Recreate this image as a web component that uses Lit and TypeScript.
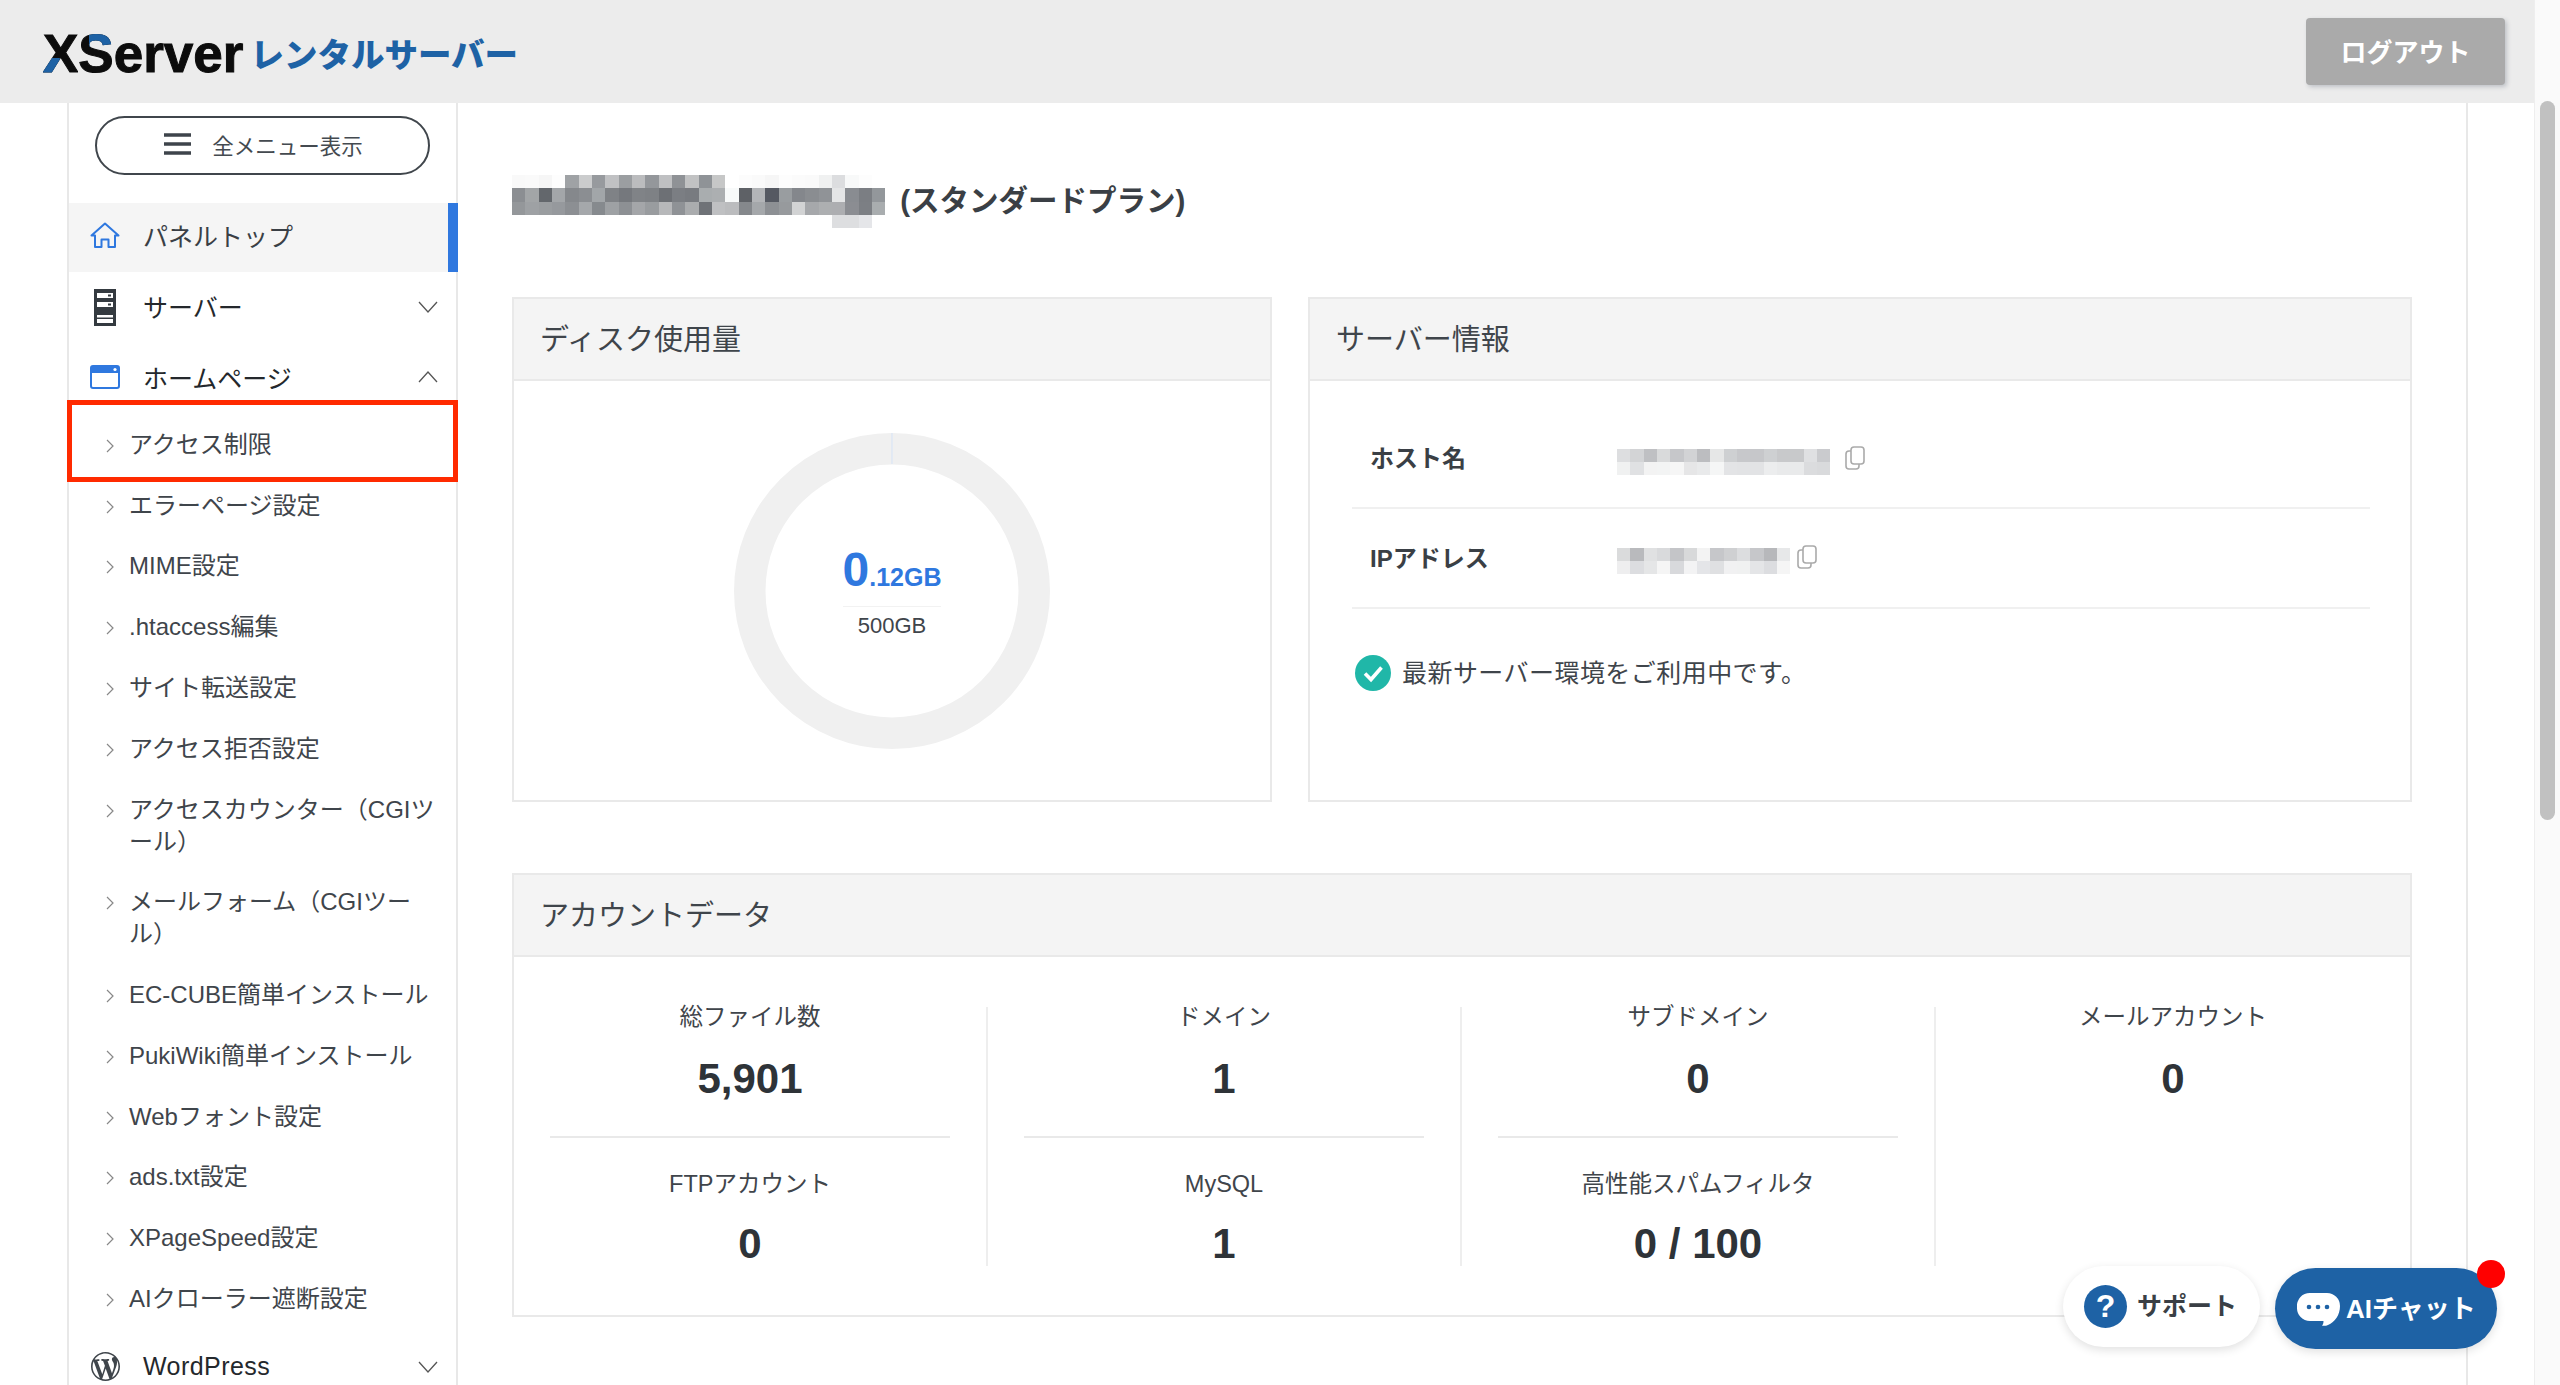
import { LitElement, html, css, svg } from "lit";
import { customElement } from "lit/decorators.js";

const navSubs = [
	["アクセス制限"],
	["エラーページ設定"],
	["MIME設定"],
	[".htaccess編集"],
	["サイト転送設定"],
	["アクセス拒否設定"],
	["アクセスカウンター（CGIツ", "ール）"],
	["メールフォーム（CGIツー", "ル）"],
	["EC-CUBE簡単インストール"],
	["PukiWiki簡単インストール"],
	["Webフォント設定"],
	["ads.txt設定"],
	["XPageSpeed設定"],
	["AIクローラー遮断設定"],
];

const stats = [
	[["総ファイル数", "5,901"], ["FTPアカウント", "0"]],
	[["ドメイン", "1"], ["MySQL", "1"]],
	[["サブドメイン", "0"], ["高性能スパムフィルタ", "0 / 100"]],
	[["メールアカウント", "0"]],
];

// mosaics over the hidden domain / host / ip, row by row
const titleMosaic = [
	"f9f9f9 fafafa f6f6f6 fdfdfd 9fa2a5 cbcccd 979a9e c0c1c3 9b9ea1 bbbcbe 94979b bfc0c2 8f9296 c1c2c3 8f9397 c6c7c7 ffffff fcfcfc fafafa f6f6f6 fdfdfd fbfbfb fafafa f0f1f1 dcdddf f8f9f9 fdfdfd ffffff",
	"8b8e92 a2a5a7 63676c a3a6a9 85888c 8b8e92 a2a6a9 7f8286 75787d 808387 7e8185 6d7075 7b7e83 787b80 a9adaf acafb1 f8fafa 5e6166 b3b5b8 555962 999da0 84878c 8a8d91 909397 e4e5e6 898c91 7b7e83 93979b",
	"94979a 9ea1a4 9a9da0 96999d 8c8f93 a5a8ab 868a8e 9ea1a4 8d9094 a4a6a9 999c9f b7b8ba 8f9296 aaacae 6f7277 bfc0c2 bbbcbe 85888c a5a8ab 8d9094 979a9d d2d3d4 a6a8ab adafb1 adaeb1 8b8d92 7c7f84 a9adaf",
	"ffffff ffffff ffffff ffffff ffffff ffffff ffffff ffffff ffffff ffffff ffffff ffffff ffffff ffffff ffffff ffffff ffffff ffffff ffffff ffffff ffffff ffffff ffffff ffffff dddee0 dddee0 e5e6e9 ffffff",
];
const hostMosaic = [
	"dddee0 d3d4d6 bfc0c3 d9dadb c6c7ca d2d3d5 bcbdc0 e6e7e7 ced0d2 c7c8cb c6c7ca ced0d2 c8c9cb c8c9cb dfe0e2 cacbce",
	"f0f1f1 e0e1e3 f3f3f3 f3f4f4 f6f6f6 e6e6e7 e9eaeb f5f6f6 e3e4e6 e2e3e5 e2e3e5 ecedee e9eaeb e9eaeb dbdcde d9dadc",
];
const ipMosaic = [
	"dadbdc b9babd e0e1e2 d9dadc c4c5c8 d8d9da f3f3f3 c6c7ca cfd0d2 dcdddf c6c7ca b7b8bb e7e8e9",
	"eeeeef dcdde0 e5e6e7 f5f5f5 d8d9dc f3f3f4 e4e5e8 dfe0e2 f1f1f2 f0f1f1 e4e5e7 dcdde0 f5f5f5",
];

const homeIcon = svg`<path d="M1.5 13.5 15 1.5l13.5 12H25V25h-6.5v-7.5h-7V25H5V13.5z" fill="none" stroke="#2f78df" stroke-width="2" stroke-linejoin="round"/>`;
const wpPath =
	"M20 10c0-5.51-4.49-10-10-10C4.48 0 0 4.49 0 10c0 5.52 4.48 10 10 10 5.51 0 10-4.48 10-10zM7.78 15.37L4.37 6.22c.55-.02 1.17-.08 1.17-.08.5-.06.44-1.13-.06-1.11 0 0-1.45.11-2.37.11-.18 0-.37 0-.58-.01C4.12 2.69 6.87 1.11 10 1.11c2.33 0 4.45.87 6.05 2.34-.68-.11-1.65.39-1.65 1.58 0 .74.45 1.36.9 2.1.35.61.55 1.36.55 2.46 0 1.49-1.4 5-1.4 5l-3.03-8.37c.54-.02.82-.17.82-.17.5-.05.44-1.25-.06-1.22 0 0-1.44.12-2.38.12-.87 0-2.33-.12-2.33-.12-.5-.03-.56 1.2-.06 1.22l.92.08 1.26 3.41zM17.41 10c.24-.64.74-1.87.43-4.25.7 1.29 1.05 2.71 1.05 4.25 0 3.29-1.73 6.24-4.4 7.78.97-2.59 1.94-5.2 2.92-7.78zM6.1 18.09C3.12 16.65 1.11 13.53 1.11 10c0-1.3.23-2.48.72-3.59C3.25 10.3 4.67 14.2 6.1 18.09zm4.03-6.63l2.58 6.98c-.86.29-1.76.45-2.71.45-.79 0-1.57-.11-2.29-.33.81-2.38 1.62-4.74 2.42-7.1z";

@customElement("app-root")
export class AppRoot extends LitElement {
	static styles = css`
		:host {
			display: flex;
			position: relative;
			height: 1385px;
			overflow: hidden;
			background: #fff;
			color: #3a3f45;
			font-family: "Liberation Sans", "Noto Sans CJK JP", sans-serif;
		}

		* {
			box-sizing: border-box;
		}

		.page {
			flex: 1;
			min-width: 0;
			display: flex;
			flex-direction: column;
		}

		.topbar {
			height: 103px;
			flex: none;
			background: #ececec;
			display: flex;
			align-items: center;
			justify-content: space-between;
			padding: 0 29px 0 43px;
		}

		.logo {
			display: flex;
			align-items: center;
			gap: 7px;
			margin-top: 4px;
		}

		.logo-en {
			font-size: 53px;
			font-weight: 700;
			line-height: 54px;
			color: #0c0c0c;
			-webkit-text-stroke: 1px #0c0c0c;
		}

		.logo-x,
		.logo-s {
			display: inline-block;
			color: transparent;
			-webkit-text-stroke: 1px transparent;
			-webkit-background-clip: text;
			background-clip: text;
		}

		.logo-x {
			background-image: linear-gradient(#1e62a5, #1e62a5),
				linear-gradient(#0c0c0c, #0c0c0c);
			background-size: 48% 42%, 100% 100%;
			background-position: left bottom, 0 0;
			background-repeat: no-repeat;
		}

		.logo-s {
			background-image: linear-gradient(#1e62a5, #1e62a5),
				linear-gradient(#0c0c0c, #0c0c0c);
			background-size: 70% 36%, 100% 100%;
			background-position: right top, 0 0;
			background-repeat: no-repeat;
		}

		.logo-jp {
			font-size: 33.5px;
			font-weight: 900;
			color: #1e62a5;
			line-height: 40px;
			margin-top: 4px;
		}

		.logout {
			width: 199px;
			height: 67px;
			display: flex;
			align-items: center;
			justify-content: center;
			padding-bottom: 3px;
			background: #aaaaaa;
			color: #fff;
			border-radius: 4px;
			font-size: 26px;
			font-weight: 700;
			box-shadow: 2px 2px 4px rgba(60, 70, 90, 0.25);
		}

		.body {
			flex: 1;
			min-height: 0;
			display: flex;
			padding: 0 66px 0 67px;
		}

		.sidebar {
			width: 391px;
			flex: none;
			border-left: 2px solid #e8e8e8;
			border-right: 2px solid #e8e8e8;
			padding-top: 13px;
		}

		.menu-btn {
			margin: 0 26px 28px 26px;
			height: 59px;
			padding: 0 0 3px 2px;
			border: 2px solid #40464c;
			border-radius: 30px;
			display: flex;
			align-items: center;
			justify-content: center;
			gap: 21px;
			font-size: 21.5px;
			color: #444a50;
		}

		.nav-item {
			height: 70px;
			display: flex;
			align-items: center;
			position: relative;
			padding-left: 20px;
			font-size: 25px;
			color: #24282c;
		}

		.nav-item.active {
			height: 69px;
			padding-bottom: 5px;
			margin-right: -2px;
			background: #f5f5f5;
			color: #3a3f45;
			border-right: 10px solid #2f78df;
		}

		.nav-item.server .nav-label {
			padding-bottom: 3px;
		}

		.nav-item.wp .nav-label {
			letter-spacing: 0.45px;
		}

		.nav-icon {
			width: 32px;
			margin-right: 22px;
			display: flex;
			justify-content: center;
			flex: none;
		}

		.nav-chev {
			margin-left: auto;
			margin-right: 18px;
		}

		.subs {
			position: relative;
			margin-top: 2.5px;
			margin-bottom: 2.3px;
		}

		.sub {
			display: flex;
			padding: 14.4px 16px 14.4px 37px;
			font-size: 24px;
			line-height: 32px;
			color: #3f454b;
		}

		.sub svg {
			flex: none;
			margin: 10px 15px 0 0;
		}

		.highlight {
			position: absolute;
			left: -2px;
			right: -2px;
			top: -14.5px;
			height: 82px;
			border: 5px solid #ff2a00;
		}

		.main {
			flex: 1;
			min-width: 0;
			border-right: 2px solid #e8e8e8;
			padding: 72px 54px 0 54px;
		}

		.title {
			display: flex;
			gap: 15px;
			height: 53px;
			margin-bottom: 69px;
			font-size: 29.5px;
			font-weight: 700;
			line-height: 52px;
			color: #3a3f45;
		}

		.mosaic {
			display: grid;
			grid-auto-rows: 13.33px;
			flex: none;
		}

		.cards {
			display: flex;
			gap: 36px;
			margin-bottom: 71px;
		}

		.card {
			border: 2px solid #e9e9e9;
		}

		.card-disk {
			width: 760px;
			height: 505px;
		}

		.card-server {
			flex: 1;
			height: 505px;
		}

		.card-head {
			height: 82px;
			background: #f4f4f4;
			border-bottom: 2px solid #e9e9e9;
			padding: 0 0 4px 26px;
			display: flex;
			align-items: center;
			font-size: 29px;
			color: #3f454b;
		}

		.disk-body {
			display: flex;
			justify-content: center;
			padding-top: 52px;
		}

		.donut {
			display: grid;
			place-items: center;
		}

		.donut > * {
			grid-area: 1 / 1;
		}

		.usage {
			display: flex;
			flex-direction: column;
			align-items: stretch;
			text-align: center;
			margin-top: -1px;
		}

		.used {
			color: #2f78df;
			font-weight: 700;
			font-size: 25px;
			line-height: 54px;
			border-bottom: 1px solid #f2f2f2;
			padding-bottom: 2px;
		}

		.used b {
			font-size: 48px;
		}

		.total {
			font-size: 22px;
			line-height: 26px;
			margin-top: 6px;
			color: #3f454b;
		}

		.server-body {
			padding: 28px 40px 0 42px;
		}

		.info-row {
			height: 100px;
			display: flex;
			align-items: center;
			border-bottom: 2px solid #f0f0f0;
			padding-left: 18px;
		}

		.info-label {
			width: 247px;
			padding-bottom: 4px;
			font-size: 24px;
			font-weight: 700;
		}

		.info-row .mosaic {
			margin-top: 8px;
		}

		.info-row.ip .mosaic {
			margin-top: 6px;
		}

		.copy {
			margin-left: 15px;
		}

		.copy.near {
			margin: -2px 0 0 7px;
		}

		.status {
			display: flex;
			align-items: center;
			gap: 11px;
			padding: 46px 0 0 3px;
			font-size: 25px;
			letter-spacing: 0.45px;
			line-height: 36px;
			color: #3f454b;
		}

		.stats {
			display: grid;
			grid-template-columns: repeat(4, 1fr);
			padding: 50px 0 49px;
		}

		.stat-col {
			border-right: 2px solid #eeeeee;
		}

		.stat-col:last-child {
			border-right: none;
		}

		.stat {
			margin: 0 36px;
			text-align: center;
		}

		.stat:first-child {
			padding-bottom: 35px;
		}

		.stat:not(:last-child) {
			border-bottom: 2px solid #e9e9e9;
		}

		.stat:nth-child(2) {
			padding-top: 36px;
		}

		.stat-label {
			font-size: 23.5px;
			line-height: 20px;
			color: #3f454b;
			white-space: nowrap;
		}

		.stat-value {
			font-size: 42px;
			font-weight: 700;
			line-height: 44px;
			margin-top: 30px;
			color: #2e3338;
		}

		.stat:nth-child(2) .stat-value {
			margin-top: 28px;
		}

		.scrollbar {
			width: 26px;
			flex: none;
			background: #fafafa;
			border-left: 1px solid #eeeeee;
			padding: 101px 5px 0;
		}

		.thumb {
			height: 719px;
			background: #c1c1c1;
			border-radius: 8px;
		}

		.floating {
			position: absolute;
			right: 63px;
			bottom: 36px;
			display: flex;
			align-items: flex-start;
			gap: 15px;
		}

		.fab {
			height: 81px;
			border-radius: 41px;
			display: flex;
			align-items: center;
			font-size: 26px;
			font-weight: 700;
			box-shadow: 0 3px 10px rgba(0, 0, 0, 0.12);
		}

		.fab-label {
			padding-bottom: 5px;
		}

		.fab-support {
			width: 197px;
			background: #fff;
			margin-top: -2px;
			padding-left: 21px;
			gap: 10px;
			font-size: 25px;
			color: #3a3f45;
		}

		.fab-q {
			width: 43px;
			height: 43px;
			border-radius: 50%;
			background: #1e62a5;
			color: #fff;
			display: flex;
			align-items: center;
			justify-content: center;
			font-size: 32px;
			font-weight: 700;
		}

		.fab-ai {
			width: 222px;
			background: #1e62a5;
			color: #fff;
			padding-left: 22px;
			gap: 6px;
			position: relative;
		}

		.fab-ai svg {
			margin-top: 2px;
		}

		.dot {
			position: absolute;
			top: -8px;
			right: -8px;
			width: 28px;
			height: 28px;
			border-radius: 50%;
			background: #ff0000;
		}
	`;

	private mosaic(rows: string[]) {
		const cols = rows[0].split(" ").length;
		return html`<div
			class="mosaic"
			style="grid-template-columns:repeat(${cols},13.33px)"
		>
			${rows.map((r) =>
				r
					.split(" ")
					.map((c) => html`<div style="background:#${c}"></div>`)
			)}
		</div>`;
	}

	private chevron(up: boolean) {
		return html`<svg class="nav-chev" width="20" height="12" viewBox="0 0 20 12">
			<path
				d=${up ? "M1 11 10 1l9 10" : "M1 1l9 10 9-10"}
				fill="none"
				stroke="#555"
				stroke-width="1.3"
			/>
		</svg>`;
	}

	private copyIcon(near = false) {
		return html`<svg
			class="copy ${near ? "near" : ""}"
			width="20"
			height="24"
			viewBox="0 0 20 24"
		>
			<rect x="1" y="5" width="13" height="18" rx="3" fill="#fff" stroke="#aaa" stroke-width="1.6" />
			<rect x="6" y="1" width="13" height="17" rx="3" fill="#fff" stroke="#aaa" stroke-width="1.6" />
		</svg>`;
	}

	private renderSidebar() {
		return html`<nav class="sidebar">
			<div class="menu-btn">
				<svg width="27" height="22" viewBox="0 0 27 22">
					<path d="M0 2h27M0 11h27M0 20h27" stroke="#3e444b" stroke-width="3.6" />
				</svg>
				<span>全メニュー表示</span>
			</div>
			<div class="nav-item active">
				<span class="nav-icon"><svg width="30" height="27" viewBox="0 0 30 27">${homeIcon}</svg></span>
				<span class="nav-label">パネルトップ</span>
			</div>
			<div class="nav-item server">
				<span class="nav-icon">
					<svg width="22" height="37" viewBox="0 0 22 37">
						<rect width="22" height="37" fill="#343a40" />
						<path d="M3 4h16v5H3zM3 13h16v5H3zM3 26h16v2.5H3zM3 30h16v4H3z" fill="#fff" />
						<path d="M14 5.5h3v2h-3zM14 14.5h3v2h-3z" fill="#343a40" />
					</svg>
				</span>
				<span class="nav-label">サーバー</span>
				${this.chevron(false)}
			</div>
			<div class="nav-item">
				<span class="nav-icon">
					<svg width="30" height="24" viewBox="0 0 30 24">
						<rect x="1" y="1" width="28" height="22" rx="2" fill="#fff" stroke="#2f78df" stroke-width="2" />
						<path d="M1 3a2 2 0 0 1 2-2h24a2 2 0 0 1 2 2v5H1z" fill="#2f78df" />
						<circle cx="25" cy="4.5" r="1.6" fill="#fff" />
					</svg>
				</span>
				<span class="nav-label">ホームページ</span>
				${this.chevron(true)}
			</div>
			<div class="subs">
				<div class="highlight"></div>
				${navSubs.map(
					(lines) => html`<div class="sub">
						<svg width="8" height="14" viewBox="0 0 8 14">
							<path d="M1 1l6 6-6 6" fill="none" stroke="#888" stroke-width="1.2" />
						</svg>
						<span>${lines[0]}${lines[1] ? html`<br />${lines[1]}` : ""}</span>
					</div>`
				)}
			</div>
			<div class="nav-item wp">
				<span class="nav-icon">
					<svg width="29" height="29" viewBox="0 0 20 20"><path d=${wpPath} fill="#3f454b" /></svg>
				</span>
				<span class="nav-label">WordPress</span>
				${this.chevron(false)}
			</div>
		</nav>`;
	}

	private renderMain() {
		return html`<main class="main">
			<div class="title">
				${this.mosaic(titleMosaic)}
				<span>(スタンダードプラン)</span>
			</div>
			<div class="cards">
				<section class="card card-disk">
					<div class="card-head">ディスク使用量</div>
					<div class="disk-body">
						<div class="donut">
							<svg width="316" height="316" viewBox="0 0 316 316">
								<circle cx="158" cy="158" r="142.25" fill="none" stroke="#f0f0f0" stroke-width="31.5" />
								<path d="M158 0v31" stroke="#d5e3f7" stroke-width="1" />
							</svg>
							<div class="usage">
								<div class="used"><b>0</b>.12GB</div>
								<div class="total">500GB</div>
							</div>
						</div>
					</div>
				</section>
				<section class="card card-server">
					<div class="card-head">サーバー情報</div>
					<div class="server-body">
						<div class="info-row">
							<span class="info-label">ホスト名</span>
							${this.mosaic(hostMosaic)} ${this.copyIcon()}
						</div>
						<div class="info-row ip">
							<span class="info-label">IPアドレス</span>
							${this.mosaic(ipMosaic)} ${this.copyIcon(true)}
						</div>
						<div class="status">
							<svg width="36" height="36" viewBox="0 0 36 36">
								<circle cx="18" cy="18" r="18" fill="#20b7a8" />
								<path d="M10 18.5l6 6 10.5-12" fill="none" stroke="#fff" stroke-width="3.6" />
							</svg>
							<span>最新サーバー環境をご利用中です。</span>
						</div>
					</div>
				</section>
			</div>
			<section class="card">
				<div class="card-head">アカウントデータ</div>
				<div class="stats">
					${stats.map(
						(col) => html`<div class="stat-col">
							${col.map(
								([label, value]) => html`<div class="stat">
									<div class="stat-label">${label}</div>
									<div class="stat-value">${value}</div>
								</div>`
							)}
						</div>`
					)}
				</div>
			</section>
		</main>`;
	}

	render() {
		return html`
			<div class="page">
				<header class="topbar">
					<div class="logo">
						<span class="logo-en"><span class="logo-x">X</span><span class="logo-s">S</span>erver</span>
						<span class="logo-jp">レンタルサーバー</span>
					</div>
					<div class="logout">ログアウト</div>
				</header>
				<div class="body">${this.renderSidebar()} ${this.renderMain()}</div>
			</div>
			<div class="scrollbar"><div class="thumb"></div></div>
			<div class="floating">
				<div class="fab fab-support">
					<span class="fab-q">?</span>
					<span class="fab-label">サポート</span>
				</div>
				<div class="fab fab-ai">
					<svg width="43" height="33" viewBox="0 0 43 33">
						<path d="M13 0h17a13 13 0 0 1 13 13c0 9-5 16-12 19-2 1-5 1-6 .5 1-1 1.500-2 1.500-4.500H13A13 13 0 0 1 0 14.500 13 13 0 0 1 13 0z" fill="#fff" />
						<circle cx="12" cy="14" r="2.3" fill="#1e62a5" />
						<circle cx="21" cy="14" r="2.3" fill="#1e62a5" />
						<circle cx="30" cy="14" r="2.3" fill="#1e62a5" />
					</svg>
					<span class="fab-label">AIチャット</span>
					<span class="dot"></span>
				</div>
			</div>
		`;
	}
}
